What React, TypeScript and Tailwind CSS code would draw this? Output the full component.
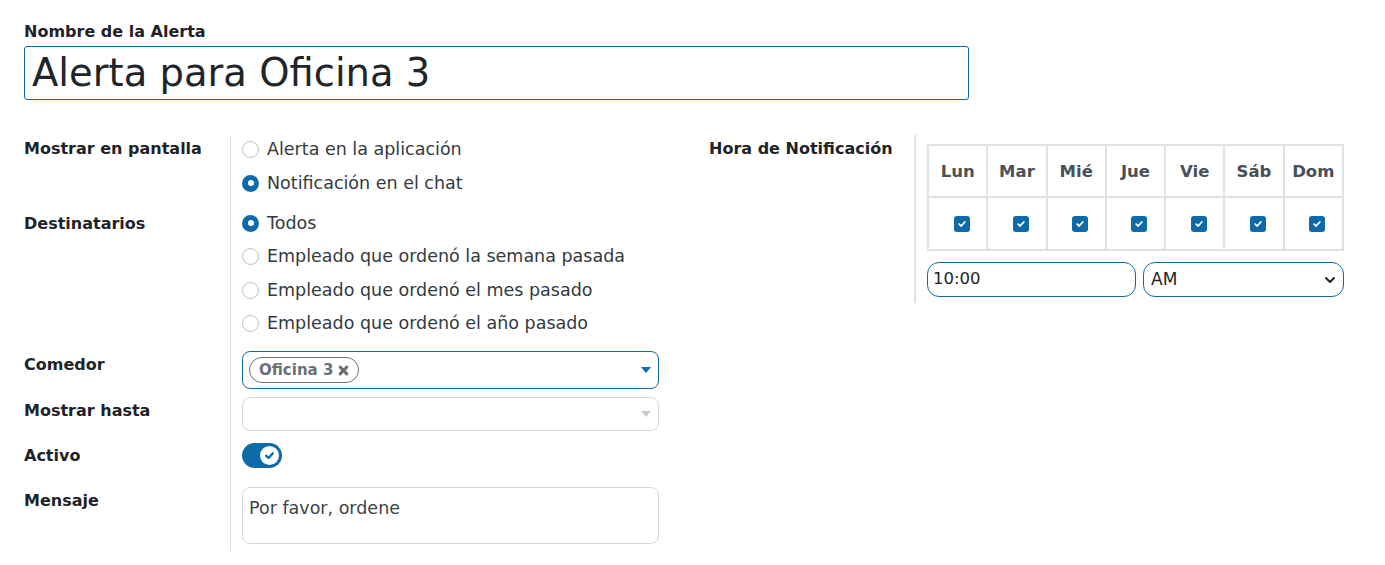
import React from "react";

const BLUE = "#0e6ba8";

function Radio({ checked, label }: { checked?: boolean; label: string }) {
  return (
    <div className="flex h-[24px] items-center gap-[8px]">
      {checked ? (
        <span className="flex h-[17px] w-[17px] items-center justify-center rounded-full bg-[#0e6ba8]">
          <span className="h-[6px] w-[6px] rounded-full bg-white" />
        </span>
      ) : (
        <span className="h-[17px] w-[17px] rounded-full border border-[#b8bec6] bg-white" />
      )}
      <span className="text-[17.5px] text-[#343a40]">{label}</span>
    </div>
  );
}

function CheckBox() {
  return (
    <span className="ml-[8px] inline-flex h-[16px] w-[16px] items-center justify-center rounded-[3px] bg-[#0e6ba8]">
      <svg width="10" height="10" viewBox="0 0 10 10">
        <path d="M2.2 5.2 L4.2 7 L7.8 3" fill="none" stroke="white" strokeWidth="1.8" strokeLinecap="round" strokeLinejoin="round" />
      </svg>
    </span>
  );
}

function Label({ children, className = "" }: { children: React.ReactNode; className?: string }) {
  return <div className={`text-[16px] font-semibold text-[#1f2328] ${className}`}>{children}</div>;
}

export default function App() {
  const days = ["Lun", "Mar", "Mié", "Jue", "Vie", "Sáb", "Dom"];
  return (
    <div className="min-h-[565px] w-[1385px] bg-white pl-[24px] pt-[21px] font-['DejaVu_Sans',sans-serif] text-[#212529]">
      <div className="text-[16px] font-semibold leading-[22px] text-[#1f2328]">Nombre de la Alerta</div>
      <div className="mt-[3px] flex h-[54px] w-[945px] items-center rounded-[3px] border border-[#0e6ba8] px-[7px]">
        <span className="text-[38.5px] leading-none text-[#212529]">Alerta para Oficina 3</span>
      </div>

      <div className="mt-[35px] flex">
        {/* Left group */}
        <div className="flex">
          <div className="w-[206px]">
            <Label className="mt-[2px] leading-[24px]">Mostrar en pantalla</Label>
            <Label className="mt-[51px] leading-[24px]">Destinatarios</Label>
            <Label className="mt-[117px] leading-[24px]">Comedor</Label>
            <Label className="mt-[22px] leading-[24px]">Mostrar hasta</Label>
            <Label className="mt-[21px] leading-[24px]">Activo</Label>
            <Label className="mt-[21px] leading-[24px]">Mensaje</Label>
          </div>
          <div className="h-[416px] w-[1px] bg-[#dee2e6]" />
          <div className="w-[428px] pl-[11px] pt-[2px]">
            <div className="flex flex-col gap-[10px]">
              <Radio label="Alerta en la aplicación" />
              <Radio checked label="Notificación en el chat" />
            </div>
            <div className="mt-[16px] flex flex-col gap-[9.5px]">
              <Radio checked label="Todos" />
              <Radio label="Empleado que ordenó la semana pasada" />
              <Radio label="Empleado que ordenó el mes pasado" />
              <Radio label="Empleado que ordenó el año pasado" />
            </div>
            <div className="mt-[15.5px] flex h-[38px] w-[417px] items-center justify-between rounded-[8px] border border-[#0e6ba8] pl-[6px] pr-[7px]">
              <span className="flex h-[26px] items-center gap-[5px] rounded-full border-[1.5px] border-[#6b7075] px-[9px] text-[15px] font-semibold text-[#6b7075]">
                Oficina 3
                <svg width="11" height="11" viewBox="0 0 10 10">
                  <path d="M2 2 L8 8 M8 2 L2 8" stroke="#6b7075" strokeWidth="2.8" strokeLinecap="round" />
                </svg>
              </span>
              <svg width="10" height="6" viewBox="0 0 10 6">
                <path d="M0 0 H10 L5 6 Z" fill={BLUE} />
              </svg>
            </div>
            <div className="mt-[8px] flex h-[34px] w-[417px] items-center justify-end rounded-[8px] border border-[#d4d7db] pr-[7px]">
              <svg width="10" height="6" viewBox="0 0 10 6">
                <path d="M0 0 H10 L5 6 Z" fill="#c7cacd" />
              </svg>
            </div>
            <div className="mt-[12px] flex h-[25px] w-[40px] items-center justify-end rounded-full bg-[#0e6ba8] pr-[3px]">
              <span className="flex h-[19px] w-[19px] items-center justify-center rounded-full bg-white">
                <svg width="13" height="13" viewBox="0 0 12 12">
                  <path d="M3 6.3 L5.2 8.3 L9 4" fill="none" stroke={BLUE} strokeWidth="2.2" strokeLinecap="round" strokeLinejoin="round" />
                </svg>
              </span>
            </div>
            <div className="mt-[19px] h-[57px] w-[417px] rounded-[8px] border border-[#d4d7db] px-[6px] pt-[7px] text-[17.5px] text-[#3d4349]">
              Por favor, ordene
            </div>
          </div>
        </div>

        {/* Right group */}
        <div className="ml-[50px] flex">
          <div className="w-[205px]">
            <Label className="mt-[2px] leading-[24px]">Hora de Notificación</Label>
          </div>
          <div className="h-[168px] w-[2px] bg-[#dee2e6]" />
          <div className="pl-[11px] pt-[9px]">
            <table className="w-[417px] border-collapse border-2 border-[#dee2e6]">
              <thead>
                <tr>
                  {days.map((d) => (
                    <th key={d} className="h-[52px] w-[59.5px] border-2 border-[#dee2e6] p-0 pt-[3px] text-center text-[16.5px] font-semibold text-[#495057]">
                      {d}
                    </th>
                  ))}
                </tr>
              </thead>
              <tbody>
                <tr>
                  {days.map((d) => (
                    <td key={d} className="h-[53px] border-2 border-[#dee2e6] p-0 text-center align-middle">
                      <div className="flex justify-center">
                        <CheckBox />
                      </div>
                    </td>
                  ))}
                </tr>
              </tbody>
            </table>
            <div className="mt-[11px] flex gap-[7px]">
              <div className="flex h-[35px] w-[209px] items-center rounded-[12px] border border-[#0e6ba8] px-[5px] text-[16.5px] text-[#212529]">
                10:00
              </div>
              <div className="flex h-[35px] w-[201px] items-center justify-between rounded-[12px] border border-[#0e6ba8] pl-[7px] pr-[6px] text-[17px] text-[#212529]">
                AM
                <svg width="14" height="14" viewBox="0 0 14 14">
                  <path d="M3 5 L7 9 L11 5" fill="none" stroke="#212529" strokeWidth="2" strokeLinecap="round" strokeLinejoin="round" />
                </svg>
              </div>
            </div>
          </div>
        </div>
      </div>
    </div>
  );
}
